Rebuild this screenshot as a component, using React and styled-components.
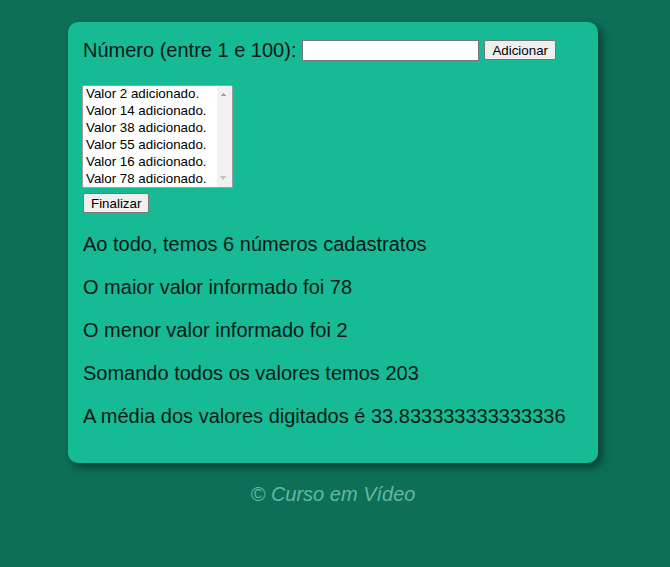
import styled, { createGlobalStyle } from "styled-components";

const valores = [2, 14, 38, 55, 16, 78];

const GlobalStyle = createGlobalStyle`
  body {
    margin: 0;
    background-color: #0c6f56;
    font-family: "Liberation Sans", Arial, sans-serif;
    font-size: 20px;
  }
`;

const App = () => {
  const soma = valores.reduce((a, b) => a + b, 0);
  const media = soma / valores.length;
  return (
    <>
      <GlobalStyle />
      <Page>
        <Card>
          <Form>
            <Label>Número (entre 1 e 100):</Label>
            <NumInput type="text" />
            <Button>Adicionar</Button>
          </Form>
          <Lista size={6}>
            {valores.map((v) => (
              <option key={v}>Valor {v} adicionado.</option>
            ))}
          </Lista>
          <Button>Finalizar</Button>
          <Res>
            <p>Ao todo, temos {valores.length} números cadastratos</p>
            <p>O maior valor informado foi {Math.max(...valores)}</p>
            <p>O menor valor informado foi {Math.min(...valores)}</p>
            <p>Somando todos os valores temos {soma}</p>
            <p>A média dos valores digitados é {String(media)}</p>
          </Res>
        </Card>
        <Footer>© Curso em Vídeo</Footer>
      </Page>
    </>
  );
};
export default App;

const Page = styled.div`
  padding: 22px 0 40px 68px;
  width: 530px;
`;

const Card = styled.section`
  box-sizing: border-box;
  width: 530px;
  padding: 15px;
  background-color: #16bb95;
  border-radius: 10px;
  box-shadow: 4px 4px 8px rgba(0, 0, 0, 0.45);
  color: #081a15;
`;

const Form = styled.div`
  display: flex;
  align-items: center;
  height: 26px;
  margin-bottom: 22px;
`;

const Label = styled.span`
  line-height: 23px;
  margin-right: 6px;
`;

const NumInput = styled.input`
  box-sizing: border-box;
  width: 177px;
  height: 21px;
  border: 1px solid #767676;
  padding: 1px 2px;
  margin: 0 5px 0 0;
  background: #fff;
`;

const Button = styled.button`
  box-sizing: border-box;
  height: 20px;
  padding: 0 7px;
  font-family: "Liberation Sans", Arial, sans-serif;
  font-size: 13.33px;
  color: #000;
  background: #efefef;
  border: 1px solid #767676;
  border-radius: 2px;
  display: block;
`;

// a fake, disabled scroll track drawn in the background (arrows + strip)
const Lista = styled.select`
  display: block;
  box-sizing: border-box;
  width: 151px;
  height: 103px;
  margin: 0 0 5px -1px;
  padding: 0 1px;
  font-family: "Liberation Sans", Arial, sans-serif;
  font-size: 13.33px;
  color: #000;
  border: 1px solid #a0a0a0;
  outline: none;
  background-color: #fff;
  background-repeat: no-repeat;
  background-image:
    linear-gradient(to top left, #a3a3a3 50%, transparent 50%),
    linear-gradient(to top right, #a3a3a3 50%, transparent 50%),
    linear-gradient(to bottom left, #c2c2c2 50%, transparent 50%),
    linear-gradient(to bottom right, #c2c2c2 50%, transparent 50%),
    linear-gradient(#f1f1f1, #f1f1f1);
  background-size: 4px 4px, 4px 4px, 4px 4px, 4px 4px, 15px 101px;
  background-position: 137px 6px, 140px 6px, 137px 90px, 140px 90px, 134px 0;
  option {
    padding: 0 2px;
    line-height: 17px;
    min-height: 17px;
  }
`;

const Res = styled.div`
  p {
    margin: 20px 0;
    line-height: 23px;
  }
`;

const Footer = styled.p`
  margin: 20px 0;
  text-align: center;
  font-style: italic;
  color: #62b9a1;
  line-height: 23px;
`;
